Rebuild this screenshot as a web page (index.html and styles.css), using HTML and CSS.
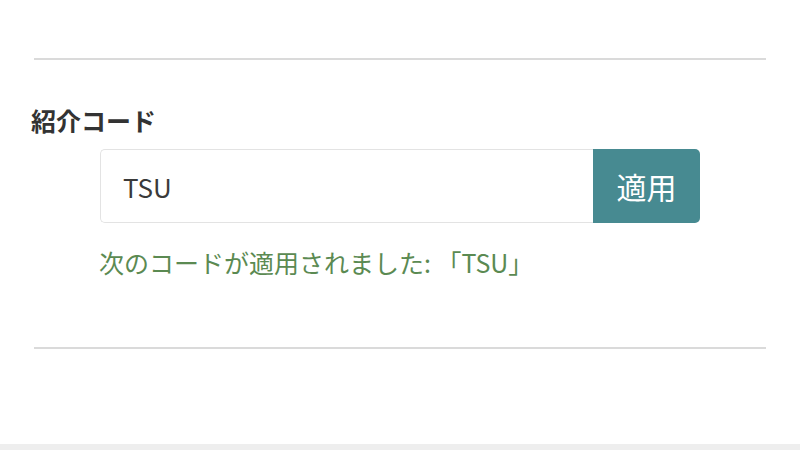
FILE: index.html
```html
<!DOCTYPE html>
<html lang="ja">
<head>
<meta charset="utf-8">
<title>紹介コード</title>
<link rel="stylesheet" href="styles.css">
</head>
<body>
<div class="page">
  <section class="section">
    <div class="rule"></div>
    <h2 class="label">紹介コード</h2>
    <div class="code-group">
      <div class="code-input">TSU</div>
      <button class="apply-btn">適用</button>
    </div>
    <p class="applied">次のコードが適用されました: 「TSU」</p>
    <div class="rule rule-bottom"></div>
  </section>
  <div class="footer-strip"></div>
</div>
</body>
</html>
```

FILE: styles.css
```css
html, body {
  margin: 0;
  padding: 0;
  background: #ffffff;
}
body {
  font-family: "Noto Sans CJK JP", "Noto Sans", sans-serif;
  color: #333333;
}
.page {
  width: 800px;
  height: 450px;
  display: flex;
  flex-direction: column;
  overflow: hidden;
}
.section {
  padding: 0 34px;
  flex: 1;
  display: flex;
  flex-direction: column;
}
.rule {
  height: 2px;
  background: #dadada;
  margin-top: 58px;
}
.rule-bottom {
  margin-top: 67px;
}
.label {
  margin: 43px 0 0 -3px;
  font-size: 25px;
  line-height: 35px;
  font-weight: 700;
  color: #333333;
}
.code-group {
  margin: 11px 0 0 66px;
  width: 600px;
  height: 74px;
  display: flex;
}
.code-input {
  flex: 1;
  border: 1px solid #e3e3e3;
  border-right: none;
  border-radius: 5px 0 0 5px;
  display: flex;
  align-items: center;
  padding-left: 22px;
  font-size: 26px;
  color: #3a3a3a;
}
.apply-btn {
  width: 107px;
  border: none;
  border-radius: 0 5px 5px 0;
  background: #478a91;
  color: #ffffff;
  font-family: "Noto Sans CJK JP", sans-serif;
  font-size: 30px;
  padding: 0;
}
.applied {
  margin: 22px 0 0 65px;
  font-size: 25px;
  line-height: 35px;
  color: #5b8a52;
}
.footer-strip {
  height: 6px;
  background: #eeeeee;
}
```
